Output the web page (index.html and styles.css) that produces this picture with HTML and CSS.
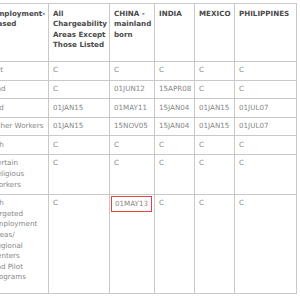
FILE: index.html
```html
<!DOCTYPE html>
<html>
<head>
<meta charset="utf-8">
<link rel="stylesheet" href="styles.css">
</head>
<body>
<table class="bulletin">
  <colgroup>
    <col class="c0"><col class="c1"><col class="c2"><col class="c3"><col class="c4"><col class="c5">
  </colgroup>
  <thead>
    <tr>
      <th>Employment-<br>Based</th>
      <th>All<br>Chargeability<br>Areas Except<br>Those Listed</th>
      <th>CHINA -<br>mainland<br>born</th>
      <th>INDIA</th>
      <th>MEXICO</th>
      <th>PHILIPPINES</th>
    </tr>
  </thead>
  <tbody>
    <tr><td>1st</td><td>C</td><td>C</td><td>C</td><td>C</td><td>C</td></tr>
    <tr><td>2nd</td><td>C</td><td>01JUN12</td><td>15APR08</td><td>C</td><td>C</td></tr>
    <tr><td>3rd</td><td>01JAN15</td><td>01MAY11</td><td>15JAN04</td><td>01JAN15</td><td>01JUL07</td></tr>
    <tr><td>Other Workers</td><td>01JAN15</td><td>15NOV05</td><td>15JAN04</td><td>01JAN15</td><td>01JUL07</td></tr>
    <tr><td>4th</td><td>C</td><td>C</td><td>C</td><td>C</td><td>C</td></tr>
    <tr><td>Certain<br>Religious<br>Workers</td><td>C</td><td>C</td><td>C</td><td>C</td><td>C</td></tr>
    <tr class="last"><td>5th<br>Targeted<br>Employment<br>Areas/<br>Regional<br>Centers<br>and Pilot<br>Programs</td><td>C</td><td class="hl"><div class="mark">01MAY13</div></td><td>C</td><td>C</td><td>C</td></tr>
  </tbody>
</table>
</body>
</html>
```
FILE: styles.css
```css
html, body {
  margin: 0;
  padding: 0;
  background: #fff;
  overflow: hidden;
}
.bulletin {
  margin: 3px 0 0 -13px;
  border-collapse: collapse;
  table-layout: fixed;
  width: 309px;
  font-family: "DejaVu Sans", Verdana, sans-serif;
  font-size: 7.15px;
  line-height: 10.6px;
}
.c0 { width: 61px; }
.c1 { width: 61px; }
.c2 { width: 45px; }
.c3 { width: 40px; }
.c4 { width: 40px; }
.c5 { width: 62px; }
.bulletin th, .bulletin td {
  border: 1px solid #c9c9c9;
  text-align: left;
  vertical-align: top;
  white-space: nowrap;
}
.bulletin th {
  color: #4a4a4a;
  font-weight: bold;
  padding: 4.7px 2px 9.9px 4px;
}
.bulletin td {
  color: #888;
  padding: 3.5px 2px 3.5px 4px;
}
.bulletin tr.last td {
  padding-bottom: 9.9px;
}
.bulletin td.hl {
  padding: 0 1px 0 1px;
}
.mark {
  border: 1px solid #e8404b;
  padding: 2px 3px;
  margin: 1px 1px 0 0;
}
```
